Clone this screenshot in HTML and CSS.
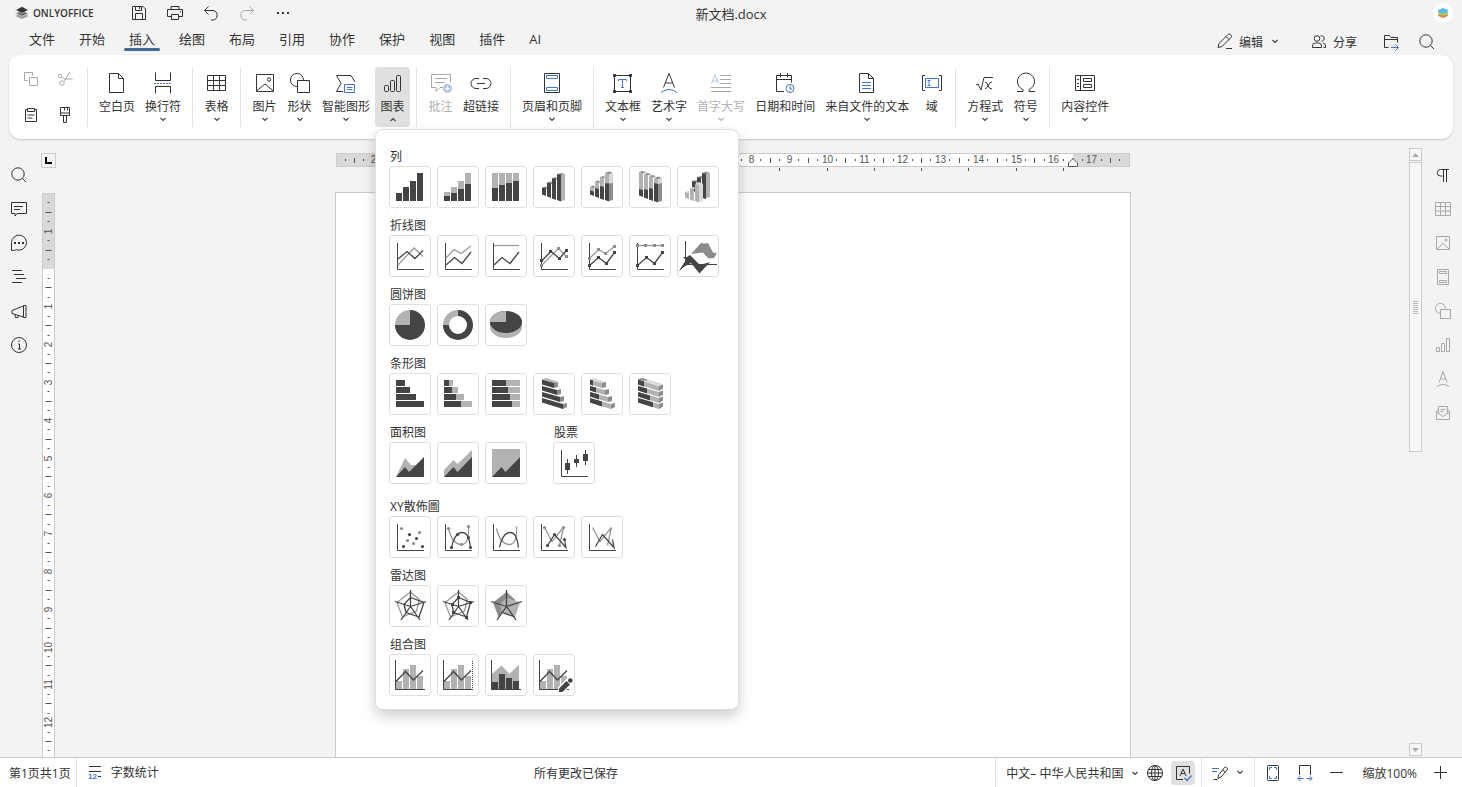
FILE: index.html
```html
<!DOCTYPE html>
<html lang="zh-CN">
<head>
<meta charset="utf-8">
<title>新文档.docx</title>
<link rel="stylesheet" href="styles.css">
</head>
<body>
<svg class="defs" aria-hidden="true">
  <symbol id="chev" viewBox="0 0 8 5"><path d="M1.500 1L4 3.500 6.500 1" fill="none" stroke="currentColor" stroke-width="1.200"/></symbol>
  <symbol id="axes" viewBox="0 0 40 40"><path d="M7.500 7v26.500H34" fill="none" stroke="#444"/></symbol>
  <symbol id="search" viewBox="0 0 24 24"><circle cx="11" cy="11" r="6.200"/><path d="M15.500 15.500l3.500 3.500"/></symbol>
</svg>

<header class="titlebar">
  <div class="brand">
    <svg width="14" height="14" viewBox="0 0 14 14"><path d="M7 6.800L.5 9.900 7 13l6.500-3.100z" fill="#999"/><path d="M7 4.500L.5 7.400 7 10.300l6.500-2.900z" fill="#666" stroke="#f3f3f3" stroke-width=".6"/><path d="M7 .5L.5 3.900 7 7.400l6.500-3.500z" fill="#333" stroke="#f3f3f3" stroke-width=".6"/></svg>
    <span>ONLYOFFICE</span>
  </div>
  <div class="quick">
    <button aria-label="保存"><svg class="ic" viewBox="0 0 24 24"><path d="M5.500 5.500h10.500l2.500 2.500v10.500h-13zM8.500 5.500v4h6v-4M8.500 18.500v-6h7v6M12.500 6v2"/></svg></button>
    <button aria-label="打印"><svg class="ic" viewBox="0 0 24 24"><path d="M8 8.500v-3h8v3M8 15.500H4.500v-7h15v7H16M8.500 13.500h7v5h-7zM17 10.500h1"/></svg></button>
    <button aria-label="撤销"><svg class="ic" viewBox="0 0 24 24"><path d="M9.500 5.500l-4 4 4 4M5.500 9.500h8.500a4.800 4.800 0 0 1 0 9.500H12"/></svg></button>
    <button aria-label="重做" disabled><svg class="ic" viewBox="0 0 24 24"><path d="M14.500 5.500l4 4-4 4M18.500 9.500H10a4.800 4.800 0 0 0 0 9.500H12"/></svg></button>
    <button aria-label="更多"><svg class="ic solid" viewBox="0 0 24 24"><path d="M6 11h2v2H6zM11 11h2v2h-2zM16 11h2v2h-2z"/></svg></button>
  </div>
  <h1 class="doc-title">新文档.docx</h1>
  <button class="avatar" aria-label="用户"><svg width="12" height="12" viewBox="0 0 12 12"><path d="M6 5L1 8v1l5 2 5-2V8z" fill="#f47a50"/><path d="M6 3L1 5.500V7l5 2 5-2V5.500z" fill="#9ccb5f"/><path d="M6 1L1 3v1.500l5 2 5-2V3z" fill="#55b8e8"/></svg></button>
</header>

<nav class="tabs">
  <button>文件</button><button>开始</button><button class="active">插入</button><button>绘图</button><button>布局</button><button>引用</button><button>协作</button><button>保护</button><button>视图</button><button>插件</button><button>AI</button>
  <div class="tab-actions">
    <button class="edit-mode"><svg class="ic" viewBox="0 0 24 24"><path d="M5 17.500l1-4L15 4.500a1.600 1.600 0 0 1 2.300 0l.7.700a1.600 1.600 0 0 1 0 2.300L9 16.500l-4 1zM13 6.500l3.300 3.300M13 18.500h6"/></svg><span>编辑</span><svg class="chev"><use href="#chev"/></svg></button>
    <button class="share"><svg class="ic" viewBox="0 0 24 24"><circle cx="10" cy="8.500" r="2.800"/><path d="M5.500 17.500v-1.500a3 3 0 0 1 3-3h3a3 3 0 0 1 3 3v1.500zM13.500 6a2.700 2.700 0 1 1 1 5.200M16 13a3 3 0 0 1 2.500 3v1.500H16.500"/></svg><span>分享</span></button>
    <button aria-label="打开文件位置"><svg class="ic" viewBox="0 0 24 24"><path d="M9.500 17.500h-4v-12h5l1.500 2h6.500v5M5.500 9.500h13"/><path class="blue" d="M12 17.500h7.500M16.500 14.500l3 3-3 3"/></svg></button>
    <button aria-label="搜索"><svg class="ic"><use href="#search"/></svg></button>
  </div>
</nav>

<section class="toolbar">
  <div class="clip">
    <button disabled aria-label="复制"><svg class="ic" viewBox="0 0 24 24"><path d="M8.500 13.500h-3v-8h8v3M10.500 10.500h8v8h-8z"/></svg></button>
    <button disabled aria-label="剪切"><svg class="ic" viewBox="0 0 24 24"><circle cx="7" cy="9" r="1.800"/><circle cx="9" cy="16" r="2.200"/><path d="M8.500 10l3 2h8M11 14.500L17 5"/></svg></button>
    <button aria-label="粘贴"><svg class="ic" viewBox="0 0 24 24"><path d="M8.500 6.500h-2v12h11v-12h-2M8.500 5.500h7v3h-7zM8.500 12h7M8.500 15h5"/></svg></button>
    <button aria-label="复制样式"><svg class="ic" viewBox="0 0 24 24"><path d="M7.500 4.500h9v8h-9zM7.500 10h9M11.500 4.500v3M14.500 4.500v3M10.500 12.500v7h3v-7"/></svg></button>
  </div>
  <div class="group">
    <button class="tool"><svg class="ic" viewBox="0 0 24 24"><path d="M4.500 2.500h9l5 5v14h-14zM13.500 2.500v5h5"/></svg><span>空白页</span></button>
    <button class="tool"><svg class="ic" viewBox="0 0 24 24"><path d="M4.500 1.500v8h15v-8M4.500 22.500v-7h15v7"/><path class="blue" stroke-dasharray="2 1" d="M3 12.500h18"/></svg><span>换行符</span><svg class="chev"><use href="#chev"/></svg></button>
  </div>
  <div class="group">
    <button class="tool"><svg class="ic" viewBox="0 0 24 24"><path d="M2.500 4.500h18v15h-18zM2.500 9.500h18M2.500 14.500h18M8.500 4.500v15M14.500 4.500v15"/></svg><span>表格</span><svg class="chev"><use href="#chev"/></svg></button>
  </div>
  <div class="group">
    <button class="tool"><svg class="ic" viewBox="0 0 24 24"><path d="M3.500 3.500h17v17h-17zM3.500 20l8.500-7 8.500 7"/><circle cx="16" cy="8.500" r="1.700"/></svg><span>图片</span><svg class="chev"><use href="#chev"/></svg></button>
    <button class="tool"><svg class="ic" viewBox="0 0 24 24"><path d="M9.500 15.400A6.500 6.500 0 1 1 15.400 9.500M9.500 9.500h12v12h-12z"/></svg><span>形状</span><svg class="chev"><use href="#chev"/></svg></button>
    <button class="tool"><svg class="ic" viewBox="0 0 24 24"><path d="M9 20.500H2.500l4.500-8-4.500-8H17l4 6.500"/><path class="blue" d="M10.500 13.500h10v8h-10zM13 16.500h5.500M13 18.500h5.500"/></svg><span>智能图形</span><svg class="chev"><use href="#chev"/></svg></button>
    <div class="menu-anchor">
      <button class="tool pressed" aria-expanded="true"><svg class="ic" viewBox="0 0 24 24"><rect x="3.500" y="14.500" width="4" height="6" rx="1"/><rect x="9.500" y="9.500" width="4" height="11" rx="1"/><rect x="15.500" y="4.500" width="4" height="16" rx="1"/></svg><span>图表</span><svg class="chev up"><use href="#chev"/></svg></button>
      <div class="gallery">
        <section>
          <h2>列</h2>
          <div class="cells">
            <button aria-label="簇状柱形图"><svg viewBox="0 0 40 40"><path class="d" d="M6 26h6v8H6zM13 20h6v14h-6zM20 14h6v20h-6zM27 6h6v28h-6z"/></svg></button>
            <button aria-label="堆积柱形图"><svg viewBox="0 0 40 40"><path class="g" d="M6 25h6v4H6zM13 20h6v6h-6zM20 14h6v8h-6zM27 6h6v11h-6z"/><path class="d" d="M6 29h6v5H6zM13 26h6v8h-6zM20 22h6v12h-6zM27 17h6v17h-6z"/></svg></button>
            <button aria-label="百分比堆积柱形图"><svg viewBox="0 0 40 40"><path class="g" d="M6 6h6v28H6zM13 6h6v28h-6zM20 6h6v28h-6zM27 6h6v28h-6z"/><path class="d" d="M6 21h6v13H6zM13 18h6v16h-6zM20 16h6v18h-6zM27 14h6v20h-6z"/></svg></button>
            <button aria-label="三维柱形图"><svg viewBox="0 0 40 40"><path class="m" d="M8 21l3-1.500 3 1-2 2zM13 16l3-1.500 3 1-2 2zM18 11.500l3-1.500 3 1-2 2zM23 7l4-1 4 1-4 1.500z"/><path class="g" d="M27 8l4-1v26l-4 1z"/><path class="d" d="M8 20.500l4 1V29l-4-1.500zM13 15.500l4 1V31l-4-1.500zM18 11l4 1v21l-4-1.500zM23 7l4 1v26.500L23 33z"/></svg></button>
            <button aria-label="三维堆积柱形图"><svg viewBox="0 0 40 40"><path class="m" d="M23 6l4-1.500L31 6l-4 1.500zM18 10l3-1 2 1-1 2zM13 14.500l3-1 2 1-1 2zM8 19.500l3-1 2 1-1 2z"/><path class="g" d="M8 20l4 1v4l-4-1zM13 15l4 1v7l-4-1zM18 10l4 1v10l-4-1zM23 6l4 1v10l-4-1z"/><path class="d" d="M8 23.500l4 1V29l-4-1.500zM13 21l4 1v9l-4-1.500zM18 19l4 1v13l-4-1.500zM23 16l4 .500V34.500L23 33z"/><path class="l" d="M27 7l4-1v10l-4 .500z"/><path class="m" d="M27 16.500l4-.5v17l-4 1z"/></svg></button>
            <button aria-label="三维百分比堆积柱形图"><svg viewBox="0 0 40 40"><path class="m" d="M9 5l3-1 4 1-3 1.500zM14 7l3-1 4 1-3 1.500zM19 9l3-1 4 1-3 1.500zM24 11l4-1.500 4 1.500-4 1.500z"/><path class="g" d="M9 5l4 1v18l-4-1zM14 7l4 1v17l-4-1zM19 9l4 1v16l-4-1zM24 11l4 1v6l-4-1z"/><path class="d" d="M9 22l4 1v7l-4-1.500zM14 22l4 1v9l-4-1.500zM19 21l4 1v12l-4-1.500zM24 16l4 1v18.500L24 34z"/><path class="l" d="M28 12l4-1v5l-4 1z"/><path class="m" d="M28 17l4-1v18l-4 1z"/></svg></button>
            <button aria-label="三维簇状柱形图"><svg viewBox="0 0 40 40"><path class="m" d="M14 14l4-1 2 1-2 2zM19 10l4-1 2 1-2 2zM24 6l4-1.500L32 6l-4 1.500z"/><path class="d" d="M14 14l4 1v10l-4-1zM19 10l4 1v18l-4-1zM24 6l4 1v25l-4-1z"/><path class="g" d="M28 7l4-1v24l-4 1z"/><path class="l" d="M7 25l3-1 3 1-2 1zM12 21l3-1 3 1-2 1zM17 17l4-2 4 2-4 2zM21 18l4-1v17l-4 1z"/><path class="g" d="M7 25l4 1v6l-4-1.500zM12 21l4 1v12l-4-1.500zM17 17l4 1v17.500L17 34z"/></svg></button>
          </div>
        </section>
        <section>
          <h2>折线图</h2>
          <div class="cells">
            <button aria-label="折线图"><svg viewBox="0 0 40 40"><use href="#axes"/><path class="gs" d="M8 29l16-17 9 8.500"/><path class="ds" d="M8 23l9-7.500 8 7 8-8"/></svg></button>
            <button aria-label="堆积折线图"><svg viewBox="0 0 40 40"><use href="#axes"/><path class="gs" d="M8 22l8-8.500 7 4 10-7.500"/><path class="ds" d="M8 29l8.500-7.500 7.500 6L33 16"/></svg></button>
            <button aria-label="百分比堆积折线图"><svg viewBox="0 0 40 40"><use href="#axes"/><path class="gs" d="M8 9.500h25"/><path class="ds" d="M8 29l8-7.500 8 6L33 16"/></svg></button>
            <button aria-label="带标记折线图"><svg viewBox="0 0 40 40"><use href="#axes"/><path class="gs" d="M8 29l16.500-16.500 8 8"/><path class="ds" d="M8 24.500l9-9 8.500 7 7-8"/><path class="m" d="M6 28h3v3H6zM23 11h3v3h-3zM31 19h3v3h-3z"/><path class="d" d="M6 23h3v3H6zM15 14h3v3h-3zM24 21h3v3h-3zM31 13h3v3h-3z"/></svg></button>
            <button aria-label="带标记堆积折线图"><svg viewBox="0 0 40 40"><use href="#axes"/><path class="gs" d="M7.500 22.500l9-9 7 4 9-7"/><path class="ds" d="M7.500 29.500l9-8 8 6 8-11"/><path class="m" d="M6 21h3v3H6zM15 12h3v3h-3zM22 16h3v3h-3zM31 9h3v3h-3z"/><path class="d" d="M6 28h3v3H6zM15 20h3v3h-3zM23 26h3v3h-3zM31 15h3v3h-3z"/></svg></button>
            <button aria-label="带标记百分比折线图"><svg viewBox="0 0 40 40"><use href="#axes"/><path class="gs" d="M7.500 9.500h25"/><path class="ds" d="M7.500 29.500l9-8 8 6 8-11"/><path class="m" d="M6 8h3v3H6zM14 8h3v3h-3zM23 8h3v3h-3zM31 8h3v3h-3z"/><path class="d" d="M6 28h3v3H6zM15 20h3v3h-3zM23 26h3v3h-3zM31 15h3v3h-3z"/></svg></button>
            <button aria-label="三维折线图"><svg viewBox="0 0 40 40"><path class="m" d="M13 18l10-11 3 .5 4-.5 5 9.500 4 .500-3 5-5.500.5-5.500-6z"/><path class="d" d="M5 21l4 0 3-2 10 10 10-3-10.500 11.500L13 27 2 33l6-9z"/><path d="M7.500 5v23.500H39M7.500 28.500l-6 6" fill="none" stroke="#444"/></svg></button>
          </div>
        </section>
        <section>
          <h2>圆饼图</h2>
          <div class="cells">
            <button aria-label="饼图"><svg viewBox="0 0 40 40"><path class="g" d="M20 20H5A15 15 0 0 1 20 5z"/><path class="d" d="M20 20V5A15 15 0 1 1 5 20z"/></svg></button>
            <button aria-label="圆环图"><svg viewBox="0 0 40 40"><path class="g" d="M5 20A15 15 0 0 1 20 5v6a9 9 0 0 0-9 9z"/><path class="d" d="M20 5A15 15 0 1 1 5 20h6a9 9 0 1 0 9-9z"/></svg></button>
            <button aria-label="三维饼图"><svg viewBox="0 0 40 40"><path class="g" d="M4 17v5a16 11 0 0 0 32 0v-5z"/><ellipse class="d" cx="20" cy="17" rx="16" ry="11"/><path class="g" d="M20 17H4A16 11 0 0 1 20 6z"/></svg></button>
          </div>
        </section>
        <section>
          <h2>条形图</h2>
          <div class="cells">
            <button aria-label="簇状条形图"><svg viewBox="0 0 40 40"><path class="d" d="M6 6h9v6H6zM6 13h14v6H6zM6 20h20v6H6zM6 27h28v6H6z"/></svg></button>
            <button aria-label="堆积条形图"><svg viewBox="0 0 40 40"><path class="g" d="M6 6h9v6H6zM6 13h14v6H6zM6 20h20v6H6zM6 27h28v6H6z"/><path class="d" d="M6 6h5v6H6zM6 13h8v6H6zM6 20h12v6H6zM6 27h17v6H6z"/></svg></button>
            <button aria-label="百分比堆积条形图"><svg viewBox="0 0 40 40"><path class="g" d="M6 6h28v6H6zM6 13h28v6H6zM6 20h28v6H6zM6 27h28v6H6z"/><path class="d" d="M6 6h14v6H6zM6 13h16v6H6zM6 20h18v6H6zM6 27h20v6H6z"/></svg></button>
            <button aria-label="三维条形图"><svg viewBox="0 0 40 40"><path class="g" d="M8 5l4-1 12 4-4 1z"/><path class="m" d="M20 9l4-1v5l-4 1zM23 16l4-1v5l-4 1zM26 23l4-1v5l-4 1zM29 30l4-1v4l-4 2z"/><path class="d" d="M8 5.500l12 3.500v5L8 10.500zM8 12l15 4v5L8 16.500zM8 18l18 5v5L8 22.500zM8 24l21 6v5L8 28.500z"/></svg></button>
            <button aria-label="三维堆积条形图"><svg viewBox="0 0 40 40"><path class="l" d="M8 5l4-1 12 4-4 1z"/><path class="m" d="M20 9l4-1v5l-4 1zM23 16l4-1v5l-4 1zM26 23l4-1v5l-4 1zM29 30l4-1v4l-4 2z"/><path class="g" d="M8 5.500l12 3.500v5L8 10.500zM8 12l15 4v5L8 16.500zM8 18l18 5v5L8 22.500zM8 24l21 6v5L8 28.500z"/><path class="d" d="M8 5.500l3 1v5l-3-1zM8 12l6 1.500v5l-6-2zM8 18l9 2.500v5l-9-3zM8 24l12 3.500v5l-12-4z"/></svg></button>
            <button aria-label="三维百分比条形图"><svg viewBox="0 0 40 40"><path class="l" d="M8 5l4-1 21 6-4 1.500z"/><path class="m" d="M8 5l4-1 6 2-4 1zM29 12l4-1.500v4L29 17zM29 18l4-1.500v4L29 23zM29 24l4-1.500v4L29 29zM29 30l4-1.500v4L29 35z"/><path class="g" d="M8 5.500L29 12v5L8 10.500zM8 12l21 6v5L8 16.500zM8 18l21 6v5L8 22.500zM8 24l21 6v5L8 28.500z"/><path class="d" d="M8 5.500l6 2v5l-6-2zM8 12l9 2.500v5l-9-3zM8 18l12 3.500v5l-12-4zM8 24l15 4.300v5l-15-4.800z"/></svg></button>
          </div>
        </section>
        <div class="pair">
          <section>
            <h2>面积图</h2>
            <div class="cells">
              <button aria-label="面积图"><svg viewBox="0 0 40 40"><path class="g" d="M6 34l9-19 6 7h8v12z"/><path class="d" d="M6 34l9-10 4 5 15-15v20z"/></svg></button>
              <button aria-label="堆积面积图"><svg viewBox="0 0 40 40"><path class="g" d="M6 27l9.500-10 4 4L34 7v27H6z"/><path class="d" d="M6 34l9.500-10 4 5L34 14v20z"/></svg></button>
              <button aria-label="百分比面积图"><svg viewBox="0 0 40 40"><path class="g" d="M6 6h28v28H6z"/><path class="d" d="M6 34l9.500-10 4 5L34 14v20z"/></svg></button>
            </div>
          </section>
          <section>
            <h2>股票</h2>
            <div class="cells">
              <button aria-label="股票图"><svg viewBox="0 0 40 40"><use href="#axes"/><path class="d" d="M11 20h5v7h-5zM13 16h1v15h-1zM20 16h5v4h-5zM22 12h1v12h-1zM29 11h5v7h-5zM31 7h1v15h-1z"/></svg></button>
            </div>
          </section>
        </div>
        <section class="spaced">
          <h2>XY散佈圖</h2>
          <div class="cells">
            <button aria-label="散点图"><svg viewBox="0 0 40 40"><use href="#axes"/><g class="m"><circle cx="11.500" cy="11.500" r="1.600"/><circle cx="29.500" cy="15.500" r="1.600"/><circle cx="17.500" cy="23.500" r="1.600"/><circle cx="23.500" cy="26.500" r="1.600"/></g><g class="d"><circle cx="19.500" cy="17.500" r="1.600"/><circle cx="26.500" cy="21.500" r="1.600"/><circle cx="13.500" cy="29.500" r="1.600"/><circle cx="32.500" cy="29.500" r="1.600"/></g></svg></button>
            <button aria-label="带平滑线和标记的散点图"><svg viewBox="0 0 40 40"><use href="#axes"/><path class="gs" d="M10.500 11.500C13 22 18 27.500 23.500 27.500S31 20 30.500 9.500"/><path class="ds" d="M13.500 30.500C15 22 19 15.500 24 15.500S31 20 32.500 30.500"/><g class="m"><circle cx="10.500" cy="11.500" r="1.600"/><circle cx="23.500" cy="27.500" r="1.600"/><circle cx="30.500" cy="9.500" r="1.600"/></g><g class="d"><circle cx="13.500" cy="30.500" r="1.600"/><circle cx="19.500" cy="17.500" r="1.600"/><circle cx="30.500" cy="20.500" r="1.600"/><circle cx="32.500" cy="30.500" r="1.600"/></g></svg></button>
            <button aria-label="带平滑线的散点图"><svg viewBox="0 0 40 40"><use href="#axes"/><path class="gs" d="M10.500 11.500C13 22 18 27.500 23.500 27.500S31 20 30.500 9.500"/><path class="ds" d="M13.500 30.500C15 22 19 15.500 24 15.500S31 20 32.500 30.500"/></svg></button>
            <button aria-label="带直线和标记的散点图"><svg viewBox="0 0 40 40"><use href="#axes"/><path class="gs" d="M10.500 10.500l7.500 14 11.500-14-4 18"/><path class="ds" d="M13.500 28.500l7-11 11.500 13-1.500-8"/><g class="m"><circle cx="10.500" cy="10.500" r="1.600"/><circle cx="29.500" cy="10.500" r="1.600"/><circle cx="25.500" cy="28.500" r="1.600"/></g><g class="d"><circle cx="13.500" cy="28.500" r="1.600"/><circle cx="20.500" cy="17.500" r="1.600"/><circle cx="30.500" cy="22.500" r="1.600"/></g></svg></button>
            <button aria-label="带直线的散点图"><svg viewBox="0 0 40 40"><use href="#axes"/><path class="gs" d="M10.500 10.500l7.500 14 11.500-14-4 18"/><path class="ds" d="M13.500 29.500l7-12 11.500 13-1.500-8"/></svg></button>
          </div>
        </section>
        <section>
          <h2>雷达图</h2>
          <div class="cells">
            <button aria-label="雷达图"><svg viewBox="0 0 40 40"><path class="gs" d="M20.500 6l9 7.500-3 11.500-14 6L7 16.500z"/><path class="ds" d="M20.500 20.500V4M20.500 20.500l15.500-5M20.500 20.500L30 34M20.500 20.500L11 34M20.500 20.500l-15.500-5M20.500 11.500l13.500 5L29 31l-13-4.500-2-8z"/></svg></button>
            <button aria-label="带标记雷达图"><svg viewBox="0 0 40 40"><path class="gs" d="M20.500 6l9 7.500-3 11.500-14 6L7 16.500z"/><path class="ds" d="M20.500 20.500V4M20.500 20.500l15.500-5M20.500 20.500L30 34M20.500 20.500L11 34M20.500 20.500l-15.500-5M20.500 11.500l12 5L28.500 31l-13-4.500-1.500-8z"/><path class="d" d="M19 10h3v3h-3zM31 15h3v3h-3zM27 30h3v3h-3zM14 25h3v3h-3zM13 17h3v3h-3z"/></svg></button>
            <button aria-label="填充雷达图"><svg viewBox="0 0 40 40"><path class="m" d="M20.500 6l9 8-14 14-3 3L7 16.500z"/><path class="g" d="M20.500 11.500l13.500 5L29 31l-13-4.500-2-8z"/><path class="ds" d="M20.500 20.500V4M20.500 20.500l15.500-5M20.500 20.500L30 34M20.500 20.500L11 34M20.500 20.500l-15.500-5M29 31l-13-4.500"/></svg></button>
          </div>
        </section>
        <section>
          <h2>组合图</h2>
          <div class="cells">
            <button aria-label="柱形折线组合图"><svg viewBox="0 0 40 40"><path class="g" d="M6 26h6v8H6zM13 14h6v20h-6zM20 10h6v24h-6zM27 21h6v13h-6z"/><path class="ax" d="M5.500 5v29.500H35"/><path class="ds" d="M6 26.500l9.500-10 8 8.500L33 15.500"/></svg></button>
            <button aria-label="次坐标轴组合图"><svg viewBox="0 0 40 40"><path class="g" d="M6 26h6v8H6zM13 14h6v20h-6zM20 10h6v24h-6zM27 21h6v13h-6z"/><path class="ax" d="M5.500 5v29.500H35"/><path class="ds" d="M6 26.500l9.500-10 8 8.500L33 15.500"/><path class="ax" stroke-dasharray="1 1" d="M34.500 6v28"/></svg></button>
            <button aria-label="面积柱形组合图"><svg viewBox="0 0 40 40"><path class="g" d="M6 19l9.500-8.500 8 8.500L33 9.500V34H6z"/><path class="d" d="M6 27h6v7H6zM13 19h6v15h-6zM20 23h6v11h-6zM27 26h6v8h-6z"/><path class="ax" d="M5.500 5v29.500H35"/></svg></button>
            <button aria-label="自定义组合图"><svg viewBox="0 0 40 40"><path class="g" d="M6 26h6v8H6zM13 14h6v20h-6zM20 10h6v24h-6zM27 21h6v13h-6z"/><path class="ax" d="M5.500 5v29.500H35"/><path class="ds" d="M6 26.500l9.500-10 8 8.500L33 15.500"/><path d="M25 37v-4l10-10.500 4 2v2.500L29 37z" fill="#fff" stroke="#fff" stroke-width="2"/><path class="d" d="M25 37v-3.500l7.500-7.500 3.500 3.500L28.500 37z"/><circle class="d" cx="36.300" cy="25.500" r="2.300"/></svg></button>
          </div>
        </section>
      </div>
    </div>
  </div>
  <div class="group">
    <button class="tool" disabled><svg class="ic" viewBox="0 0 24 24"><path d="M14 16.500h-3l-4 4v-4H2.500v-13h19v8M6 7.500h12M6 11.500h9"/><circle cx="18.500" cy="17.500" r="4.500" fill="#b3c5ec" stroke="none"/><path d="M16 17.500h5M18.500 15v5" stroke="#fff"/></svg><span>批注</span></button>
    <button class="tool"><svg class="ic" viewBox="0 0 24 24"><path d="M10 7.500H7a4.500 4.500 0 0 0 0 10h3M14 7.500h3a4.500 4.500 0 0 1 0 10h-3M8 12.500h8"/></svg><span>超链接</span></button>
  </div>
  <div class="group">
    <button class="tool"><svg class="ic" viewBox="0 0 24 24"><path d="M4.500 2.500h15v19h-15z"/><path class="blue" d="M6.500 4.500h11v3h-11zM6.500 16.500h11v3h-11z"/></svg><span>页眉和页脚</span><svg class="chev"><use href="#chev"/></svg></button>
  </div>
  <div class="group">
    <button class="tool"><svg class="ic" viewBox="0 0 24 24"><path d="M3.500 4.500h16v16h-16z"/><path d="M2.500 3.500h2v2h-2zM18.500 3.500h2v2h-2zM2.500 19.500h2v2h-2zM18.500 19.500h2v2h-2z" fill="#333"/><path class="blue" d="M7.500 10V8.500h8V10M11.500 8.500v8M10 16.500h3"/></svg><span>文本框</span><svg class="chev"><use href="#chev"/></svg></button>
    <button class="tool"><svg class="ic" viewBox="0 0 24 24"><path d="M6.500 16.500L12 2.500l5.500 14M8.500 12h7"/><path class="blue" d="M4 21.500q8-6 16 0"/></svg><span>艺术字</span><svg class="chev"><use href="#chev"/></svg></button>
    <button class="tool" disabled><svg class="ic" viewBox="0 0 24 24"><path stroke="#b3c5ec" d="M2.500 12.500L6 3.500l3.500 9M3.500 10h5"/><path d="M11 4.500h11M11 8.500h11M11 12.500h11M2 16.500h20M2 20.500h20"/></svg><span>首字大写</span><svg class="chev"><use href="#chev"/></svg></button>
    <button class="tool"><svg class="ic" viewBox="0 0 24 24"><path d="M11 20.500H3.500v-16h15v7M3.500 8.500h15M7.500 2v4.500M14.500 2v4.500"/><circle class="blue" cx="17" cy="17.500" r="4"/><path class="blue" d="M17 15v3h2"/></svg><span>日期和时间</span></button>
    <button class="tool"><svg class="ic" viewBox="0 0 24 24"><path d="M4.500 2.500h9l5 5v14h-14zM13.500 2.500v5h5"/><path class="blue" d="M7 11.500h9M7 14.500h9M7 17.500h9"/></svg><span>来自文件的文本</span><svg class="chev"><use href="#chev"/></svg></button>
    <button class="tool"><svg class="ic" viewBox="0 0 24 24"><path d="M5 4.500H2.500v15H5M19 4.500h2.500v15H19"/><path class="blue" d="M5.500 7.500h13v9h-13zM7.500 9.500h3M9 9.500v5M7.500 14.500h3"/></svg><span>域</span></button>
  </div>
  <div class="group">
    <button class="tool"><svg class="ic" viewBox="0 0 24 24"><path d="M3 14l2-1 3 6 3-12.500h9M12 11q2 0 3 3.500t4 3.500M19 11q-2 0-3.500 3T12 18"/></svg><span>方程式</span><svg class="chev"><use href="#chev"/></svg></button>
    <button class="tool"><svg class="ic" viewBox="0 0 24 24"><path d="M3 20.500h6v-2a8.500 8.500 0 1 1 6 0v2h6"/></svg><span>符号</span><svg class="chev"><use href="#chev"/></svg></button>
  </div>
  <div class="group">
    <button class="tool"><svg class="ic" viewBox="0 0 24 24"><path d="M2.500 4.500h19v15h-19zM7.500 4.500v15M10.500 7.500h8v3h-8zM10.500 13.500h8v3h-8zM4 8.500h2M4 12.500h2M4 15.500h2"/></svg><span>内容控件</span><svg class="chev"><use href="#chev"/></svg></button>
  </div>
</section>

<main class="workspace">
  <nav class="side">
    <button aria-label="查找"><svg class="ic"><use href="#search"/></svg></button>
    <button aria-label="批注"><svg class="ic" viewBox="0 0 24 24"><path d="M4.500 5.500h15v11H10l-2 2.500v-2.500H4.500zM7 9.500h9M7 12.500h6"/></svg></button>
    <button aria-label="聊天"><svg class="ic" viewBox="0 0 24 24"><path d="M4.500 19.500v-8a7.500 7.500 0 1 1 5 7.200q-1 .8-5 .8z"/><path d="M7 12h2M11 12h2M15 12h2" stroke-width="2"/></svg></button>
    <button aria-label="标题"><svg class="ic" viewBox="0 0 24 24"><path d="M5 5.500h10M7 9.500h10M9 13.500h10M5 17.500h10"/></svg></button>
    <button aria-label="反馈"><svg class="ic" viewBox="0 0 24 24"><path d="M16.500 7L5 11.500v3L16.500 18M16.500 6.500h2.500v12h-2.500zM8 15.500l.5 3h2.500l.5-2"/></svg></button>
    <button aria-label="关于"><svg class="ic" viewBox="0 0 24 24"><circle cx="12" cy="12" r="7.500"/><path d="M11 11h1.500v5M11 16h3M12 7.500v1.500"/></svg></button>
  </nav>
  <div class="vruler-col">
    <button class="tab-stop" aria-label="制表符"><svg width="7" height="7" viewBox="0 0 7 7"><path d="M1 0v6h6" fill="none" stroke="#000" stroke-width="2"/></svg></button>
    <div class="vruler"><svg id="vruler" width="11" height="100%"></svg></div>
  </div>
  <div class="canvas">
    <div class="hruler"><svg id="hruler" width="100%" height="18"></svg></div>
    <article class="page"></article>
  </div>
  <div class="scroll">
    <button aria-label="向上"><svg width="7" height="4" viewBox="0 0 7 4"><path d="M0 4l3.500-4L7 4z" fill="#adadad"/></svg></button>
    <div class="track"><div class="thumb"></div></div>
    <button aria-label="向下"><svg width="7" height="4" viewBox="0 0 7 4"><path d="M0 0l3.500 4L7 0z" fill="#adadad"/></svg></button>
  </div>
  <nav class="side right">
    <button aria-label="段落设置"><svg class="ic" viewBox="0 0 24 24"><path d="M18 6.500H9.500a3.200 3.200 0 0 0 0 6.500h2M12.500 6.500v12.500M15.500 6.500v12.500"/></svg></button>
    <button disabled aria-label="表格设置"><svg class="ic" viewBox="0 0 24 24"><path d="M4.500 5.500h15v13h-15zM4.500 9.500h15M4.500 14h15M9.500 5.500v13M14.500 5.500v13"/></svg></button>
    <button disabled aria-label="图片设置"><svg class="ic" viewBox="0 0 24 24"><path d="M5.500 5.500h13v13h-13zM6 18l6-5.500 6 5.500"/><circle cx="15" cy="9" r="1"/></svg></button>
    <button disabled aria-label="页眉页脚设置"><svg class="ic" viewBox="0 0 24 24"><path d="M6.500 4.500h11v15h-11zM8.500 6.500h7v2h-7zM8.500 15.500h7v2h-7z"/></svg></button>
    <button disabled aria-label="形状设置"><svg class="ic" viewBox="0 0 24 24"><path d="M9.500 14.400A5 5 0 1 1 14.400 9.500M9.500 10.500h10v9h-10z"/></svg></button>
    <button disabled aria-label="图表设置"><svg class="ic" viewBox="0 0 24 24"><path d="M5.500 14.500h3v4h-3zM10.500 10.500h3v8h-3zM15.500 5.500h3v13h-3z"/></svg></button>
    <button disabled aria-label="艺术字设置"><svg class="ic" viewBox="0 0 24 24"><path d="M8 15.500l4-11 4 11M9.500 12h5M6 19.500q6-4 12 0"/></svg></button>
    <button disabled aria-label="邮件合并"><svg class="ic" viewBox="0 0 24 24"><path d="M7.500 8.500l-2 1.500v8.500h13V10l-2-1.500M7.500 12.500v-7h9v7M5.500 11l6.500 4.500 6.500-4.500M9.500 8.500h5M9.500 10.500h3"/></svg></button>
  </nav>
</main>

<footer class="status">
  <div class="status-left">
    <button class="pages">第1页共1页</button>
    <button class="count"><svg class="ic" viewBox="0 0 24 24"><path d="M6 5.500h12M6 10.500h12M15 15.500h3"/><text x="5" y="18">12</text></svg><span>字数统计</span></button>
  </div>
  <p class="saved">所有更改已保存</p>
  <div class="status-right">
    <button class="lang">中文– 中华人民共和国<svg class="chev"><use href="#chev"/></svg></button>
    <button class="sq" aria-label="文档语言"><svg class="ic" viewBox="0 0 24 24"><circle cx="12" cy="12" r="7.500"/><ellipse cx="12" cy="12" rx="3.500" ry="7.500"/><path d="M12 4.500v15M4.500 12h15M5.500 8.500h13M5.500 15.500h13"/></svg></button>
    <button class="sq pressed spell" aria-label="拼写检查"><svg class="ic" viewBox="0 0 24 24"><path d="M12 18.500H5.500v-13h13v7M9 15l3-7 3 7M10 12.500h4"/><path class="blue" stroke-width="1.300" d="M13.500 17l2.500 2.500 4.500-5"/></svg></button>
    <button class="track-changes"><svg class="ic" viewBox="0 0 24 24"><path d="M10 16.500l.8-2.800L16.500 6.500a1.400 1.400 0 0 1 2 0l.5.500a1.400 1.400 0 0 1 0 2L13 16l-3 1.500zM14.800 9l2.500 2.500M5.500 18.500h4"/><path class="blue" d="M4 7.500h7M4 10.500h5"/></svg><svg class="chev"><use href="#chev"/></svg></button>
    <div class="zoom">
      <button class="sq" aria-label="适合页面"><svg class="ic" viewBox="0 0 24 24"><rect x="6.500" y="4.500" width="11" height="15" rx="1"/><path class="blue" d="M8.500 9V6.500H11M13 6.500h2.500V9M15.500 15v2.500H13M11 17.500H8.500V15"/></svg></button>
      <button class="sq" aria-label="适合宽度"><svg class="ic" viewBox="0 0 24 24"><path d="M6.500 14V4.500h11V14"/><path class="blue" d="M5 17.500h5.500M7.500 15L5 17.500 7.500 20M19 17.500h-5.500M16.500 15l2.500 2.500-2.500 2.500"/></svg></button>
      <button class="sq" aria-label="缩小"><svg class="ic" viewBox="0 0 24 24"><path d="M5 11.500h13"/></svg></button>
      <button class="level">缩放100%</button>
      <button class="sq" aria-label="放大"><svg class="ic" viewBox="0 0 24 24"><path d="M5 11.500h13M11.500 5v13"/></svg></button>
    </div>
  </div>
</footer>
<script src="rulers.js"></script>
</body>
</html>
```

FILE: styles.css
```css
* { box-sizing: border-box; }
body {
  margin: 0;
  height: 100vh;
  display: flex;
  flex-direction: column;
  overflow: hidden;
  background: #f3f3f3;
  color: #333;
  font: 12px/18px "Open Sans", "Noto Sans CJK SC", sans-serif;
}
button {
  margin: 0; padding: 0; border: 0; background: none;
  font: inherit; color: inherit;
  display: flex; align-items: center; justify-content: center;
  white-space: nowrap;
}
h1, h2, p { margin: 0; font: inherit; }
.defs { position: absolute; width: 0; height: 0; }
.ic { display: block; flex: none; width: 24px; height: 24px; fill: none; stroke: #333; }
.ic.solid { fill: #333; stroke: none; }
.blue { stroke: #4473ca; }
.chev { display: block; flex: none; width: 8px; height: 5px; color: #444; }
.chev.up { transform: rotate(180deg); }
button:disabled { color: #b2b2b2; }
button:disabled .ic { stroke: #a8a8a8; }
button:disabled .chev { color: #b2b2b2; }

.titlebar { flex: none; height: 28px; display: flex; align-items: center; padding: 0 9px 2px 15px; position: relative; }
.brand { display: flex; align-items: center; gap: 4px; width: 106px; font-size: 10px; font-weight: 600; }
.quick { display: flex; }
.quick button { width: 36px; height: 24px; }
.doc-title { position: absolute; left: 0; right: 0; top: 5px; text-align: center; font-size: 13px; pointer-events: none; }
.avatar { margin-left: auto; width: 20px; height: 20px; border-radius: 50%; background: #fff; }

.tabs { flex: none; height: 27px; display: flex; padding: 0 23px 0 17px; font-size: 13px; }
.tabs > button { height: 23px; padding: 0 12px 2px; position: relative; }
.tabs > .active::after { content: ""; position: absolute; left: 7px; right: 7px; bottom: 0; height: 3px; border-radius: 2px; background: #446995; }
.tab-actions { margin-left: auto; display: flex; align-items: center; font-size: 12px; gap: 12px; }
.edit-mode { gap: 2px; }
.edit-mode span, .share span { padding-top: 2px; }
.edit-mode .chev { margin-left: 6px; }
.share { margin: 0 10px 0 16px; gap: 2px; }

.toolbar { flex: none; height: 84px; margin: 0 9px; padding: 12px 0; display: flex; background: #fff; border-radius: 12px; box-shadow: 0 1px 2px rgba(0,0,0,.18); position: relative; z-index: 2; }
.clip { width: 78px; padding-left: 5px; display: grid; grid-template-columns: 34px 34px; grid-template-rows: 24px 24px; row-gap: 12px; }
.group { display: flex; padding: 0 6px; border-left: 1px solid #e4e4e4; }
.tool { flex-direction: column; justify-content: flex-start; height: 60px; min-width: 35px; padding: 4px 5px 0; border-radius: 4px; }
.tool span { margin-top: 3px; }
.tool .chev { margin-top: 1px; }
.pressed { background: #e0e0e0; }
.menu-anchor { position: relative; }

.gallery { position: absolute; left: 0; top: 62px; width: 364px; padding: 16px 13px; background: #fff; border: 1px solid #dfdfdf; border-radius: 8px; box-shadow: 0 6px 14px rgba(0,0,0,.2); display: flex; flex-direction: column; gap: 7px; padding-bottom: 13px; }
.gallery h2 { height: 20px; padding-left: 1px; line-height: 22px; white-space: nowrap; }
.cells { display: flex; gap: 6px; }
.cells button { width: 42px; height: 42px; border: 1px solid #dfdfdf; border-radius: 3px; }
.cells svg { width: 40px; height: 40px; display: block; }
.pair { display: flex; gap: 26px; }
.spaced { margin-top: 5px; }
.d { fill: #444; }
.g { fill: #b2b2b2; }
.m { fill: #8c8c8c; }
.l { fill: #d9d9d9; }
.ax { fill: none; stroke: #444; }
.ds { fill: none; stroke: #444; stroke-width: 1.3; }
.gs { fill: none; stroke: #999; stroke-width: 1.3; }

.workspace { flex: 1; min-height: 0; display: flex; }
.side { flex: none; width: 41px; padding: 19px 4px 0 0; display: flex; flex-direction: column; }
.side button { height: 34px; }
.side.right { width: 40px; padding: 19px 0 0 2px; }
.vruler-col { flex: none; width: 15px; padding-top: 14px; display: flex; flex-direction: column; gap: 25px; }
.tab-stop { height: 15px; border: 1px solid #cbcbcb; }
.vruler { flex: 1; min-height: 0; width: 13px; margin-left: 1px; overflow: hidden; border: 1px solid #cbcbcb; border-bottom: 0; background: linear-gradient(#d9d9d9 75px, #fff 75px); }
.canvas { flex: 1; min-width: 0; padding: 14px 0 0 1px; display: flex; flex-direction: column; align-items: center; overflow: hidden; }
.hruler { flex: none; width: 794px; height: 14px; border: 1px solid #cbcbcb; background: linear-gradient(90deg, #d9d9d9 112px, #fff 112px, #fff 736px, #d9d9d9 736px); }
.hruler svg, .vruler svg { display: block; overflow: visible; }
.tick { stroke: #555; }
.hruler text, .vruler text { font: 10px "Liberation Sans", sans-serif; fill: #555; text-anchor: middle; }
.page { flex: 1; width: 796px; margin-top: 25px; background: #fff; border: 1px solid #cbcbcb; border-bottom: 0; }

.scroll { flex: none; width: 13px; padding: 9px 0 1px; display: flex; flex-direction: column; gap: 1px; }
.scroll button { flex: none; height: 13px; border: 1px solid #cbcbcb; background: #f7f7f7; }
.track { flex: 1; min-height: 0; }
.thumb { height: 50%; border: 1px solid #cbcbcb; background: #f7f7f7; display: flex; align-items: center; justify-content: center; }
.thumb::after { content: ""; width: 5px; height: 13px; background: repeating-linear-gradient(#b8b8b8 0 1px, transparent 1px 2px); }

.status { flex: none; height: 30px; border-top: 1px solid #cbcbcb; background: #fff; display: flex; justify-content: space-between; position: relative; }
.status-left, .status-right, .zoom { display: flex; align-items: center; }
.status-left > *, .status-right > * { height: 29px; }
.pages { padding: 2px 5px 0 9px; border-right: 1px solid #e4e4e4; }
.count { padding-left: 6px; gap: 4px; }
.count text { font: bold 8px "Liberation Sans", sans-serif; fill: #4473ca; stroke: none; }
.saved { position: absolute; left: 0; right: 310px; top: 7px; text-align: center; }
.status-right .sq { width: 24px; height: 24px; border-radius: 4px; }
.lang { padding: 2px 4px 0 10px; gap: 8px; border-left: 1px solid #e4e4e4; }
.spell { margin: 0 6px 0 4px; }
.track-changes { padding: 0 10px 0 6px; gap: 4px; border: solid #e4e4e4; border-width: 0 1px; }
.zoom { padding: 0 9px 0 6px; gap: 8px; }
.level { padding: 2px 4px 0 5px; }
```

FILE: rulers.js
```js
const NS = "http://www.w3.org/2000/svg";
const CM = 37.8;

function add(parent, name, attrs, text) {
  const el = document.createElementNS(NS, name);
  for (const key in attrs) el.setAttribute(key, attrs[key]);
  if (text) el.textContent = text;
  parent.appendChild(el);
}

// Quarter-centimetre marks, with a number on every whole centimetre.
function drawRuler(svg, zero, length, vertical) {
  svg.replaceChildren();
  for (let q = -Math.floor(zero / CM * 4); zero + q * CM / 4 < length - 6; q++) {
    const p = Math.floor(zero + q * CM / 4) + 0.5;
    if (p < 5 || q === 0) continue;
    if (q % 4 === 0) {
      const label = String(Math.abs(q / 4));
      if (vertical) add(svg, "text", { transform: `translate(9 ${p}) rotate(-90)` }, label);
      else add(svg, "text", { x: p, y: 9 }, label);
    } else {
      const half = q % 2 === 0 ? 3 : 1;
      const d = vertical ? `M${5.5 - half} ${p}h${half * 2}` : `M${p} ${half === 1 ? 5 : 4}v${half === 1 ? 2 : 5}`;
      add(svg, "path", { d, class: "tick" });
    }
  }
}

function draw() {
  const h = document.getElementById("hruler");
  const v = document.getElementById("vruler");
  drawRuler(h, 112, h.parentNode.clientWidth, false);
  drawRuler(v, 75, v.parentNode.clientHeight, true);

  // Default tab stops, every 1.25 cm under the ruler.
  for (let i = 1; i * 47.25 < 624; i++) {
    add(h, "path", { d: `M${Math.floor(112 + i * 47.25) + 0.5} 14v3`, class: "tick" });
  }
  add(h, "path", { d: "M736 4.500l4.500 4.500v3.500h-9v-3.500z", fill: "#fff", stroke: "#555" });
}

draw();
window.addEventListener("resize", draw);
```
